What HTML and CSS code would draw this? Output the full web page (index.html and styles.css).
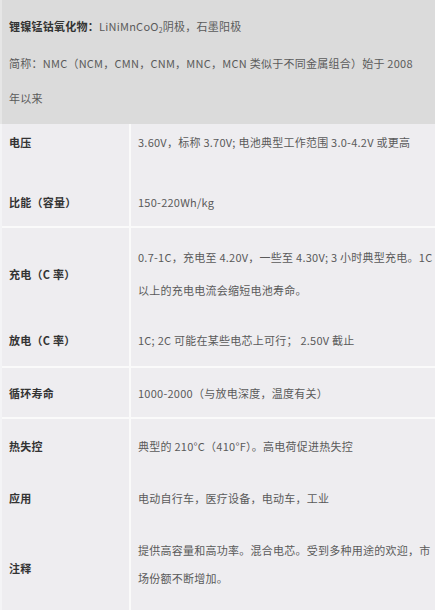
FILE: index.html
```html
<!DOCTYPE html>
<html lang="zh">
<head>
<meta charset="utf-8">
<title>NMC</title>
<link rel="stylesheet" href="styles.css">
</head>
<body>
<div class="page">
  <div class="intro">
    <div class="line"><b class="lead">锂镍锰钴氧化物：</b>LiNiMnCoO<sub>2</sub>阴极，石墨阳极</div>
    <div class="line">简称：NMC（NCM，CMN，CNM，MNC，MCN 类似于不同金属组合）始于 2008</div>
    <div class="line">年以来</div>
  </div>
  <div class="table">
    <div class="row r1"><div class="k">电压</div><div class="v">3.60V，标称 3.70V; 电池典型工作范围 3.0-4.2V 或更高</div></div>
    <div class="row r2 sep"><div class="k">比能（容量）</div><div class="v">150-220Wh/kg</div></div>
    <div class="row r3"><div class="k">充电（C 率）</div><div class="v tall"><span>0.7-1C，充电至 4.20V，一些至 4.30V; 3 小时典型充电。1C</span><span>以上的充电电流会缩短电池寿命。</span></div></div>
    <div class="row r4 sep"><div class="k">放电（C 率）</div><div class="v">1C; 2C 可能在某些电芯上可行； 2.50V 截止</div></div>
    <div class="row r5 sep"><div class="k">循环寿命</div><div class="v">1000-2000（与放电深度，温度有关）</div></div>
    <div class="row r6"><div class="k">热失控</div><div class="v">典型的 210°C（410°F）。高电荷促进热失控</div></div>
    <div class="row r7"><div class="k">应用</div><div class="v">电动自行车，医疗设备，电动车，工业</div></div>
    <div class="row r8"><div class="k">注释</div><div class="v mid"><span>提供高容量和高功率。混合电芯。受到多种用途的欢迎，市</span><span>场份额不断增加。</span></div></div>
  </div>
</div>
</body>
</html>
```
FILE: styles.css
```css
html, body {
  margin: 0;
  padding: 0;
  background: #eeedf0;
}
.page {
  width: 435px;
  height: 610px;
  overflow: hidden;
  font-family: "Noto Sans CJK SC", "Noto Sans", sans-serif;
  font-size: 11px;
  letter-spacing: 0.25px;
  color: #5a5a5a;
}
.intro {
  background: #dbdbdb;
  height: 124px;
  box-sizing: border-box;
  padding: 9px 0 0 7px;
  border-left: 2px solid #e6e6e6;
}
.intro .line {
  line-height: 35px;
  white-space: nowrap;
}
.lead {
  color: #333;
  font-weight: bold;
}
sub {
  font-size: 7px;
  vertical-align: baseline;
  position: relative;
  top: 2px;
}
.table {
  display: flex;
  flex-direction: column;
  border-left: 2px solid #f4f4f6;
}
.row {
  display: grid;
  grid-template-columns: 129px 1fr;
  align-items: stretch;
  box-sizing: border-box;
}
.row.sep {
  border-bottom: 2px solid #fafafa;
}
.k, .v {
  display: flex;
  flex-direction: column;
  justify-content: center;
  line-height: 20px;
  padding-top: var(--pt, 0px);
  padding-bottom: var(--pb, 0px);
}
.k {
  color: #333;
  font-weight: bold;
  padding-left: 7px;
  border-right: 2px solid #fafafa;
}
.v {
  padding-left: 7px;
  white-space: nowrap;
}
.v.tall { line-height: 33px; }
.v.mid { line-height: 28px; }
.r1 { height: 48px; --pb: 12px; }
.r2 { height: 56px; --pt: 6px; }
.r3 { height: 92px; }
.r4 { height: 48px; --pb: 6px; }
.r5 { height: 51px; }
.r6 { height: 51px; --pt: 3px; }
.r7 { height: 55px; }
.r8 { height: 85px; }
.r8 .v { padding-bottom: 7px; }
```
